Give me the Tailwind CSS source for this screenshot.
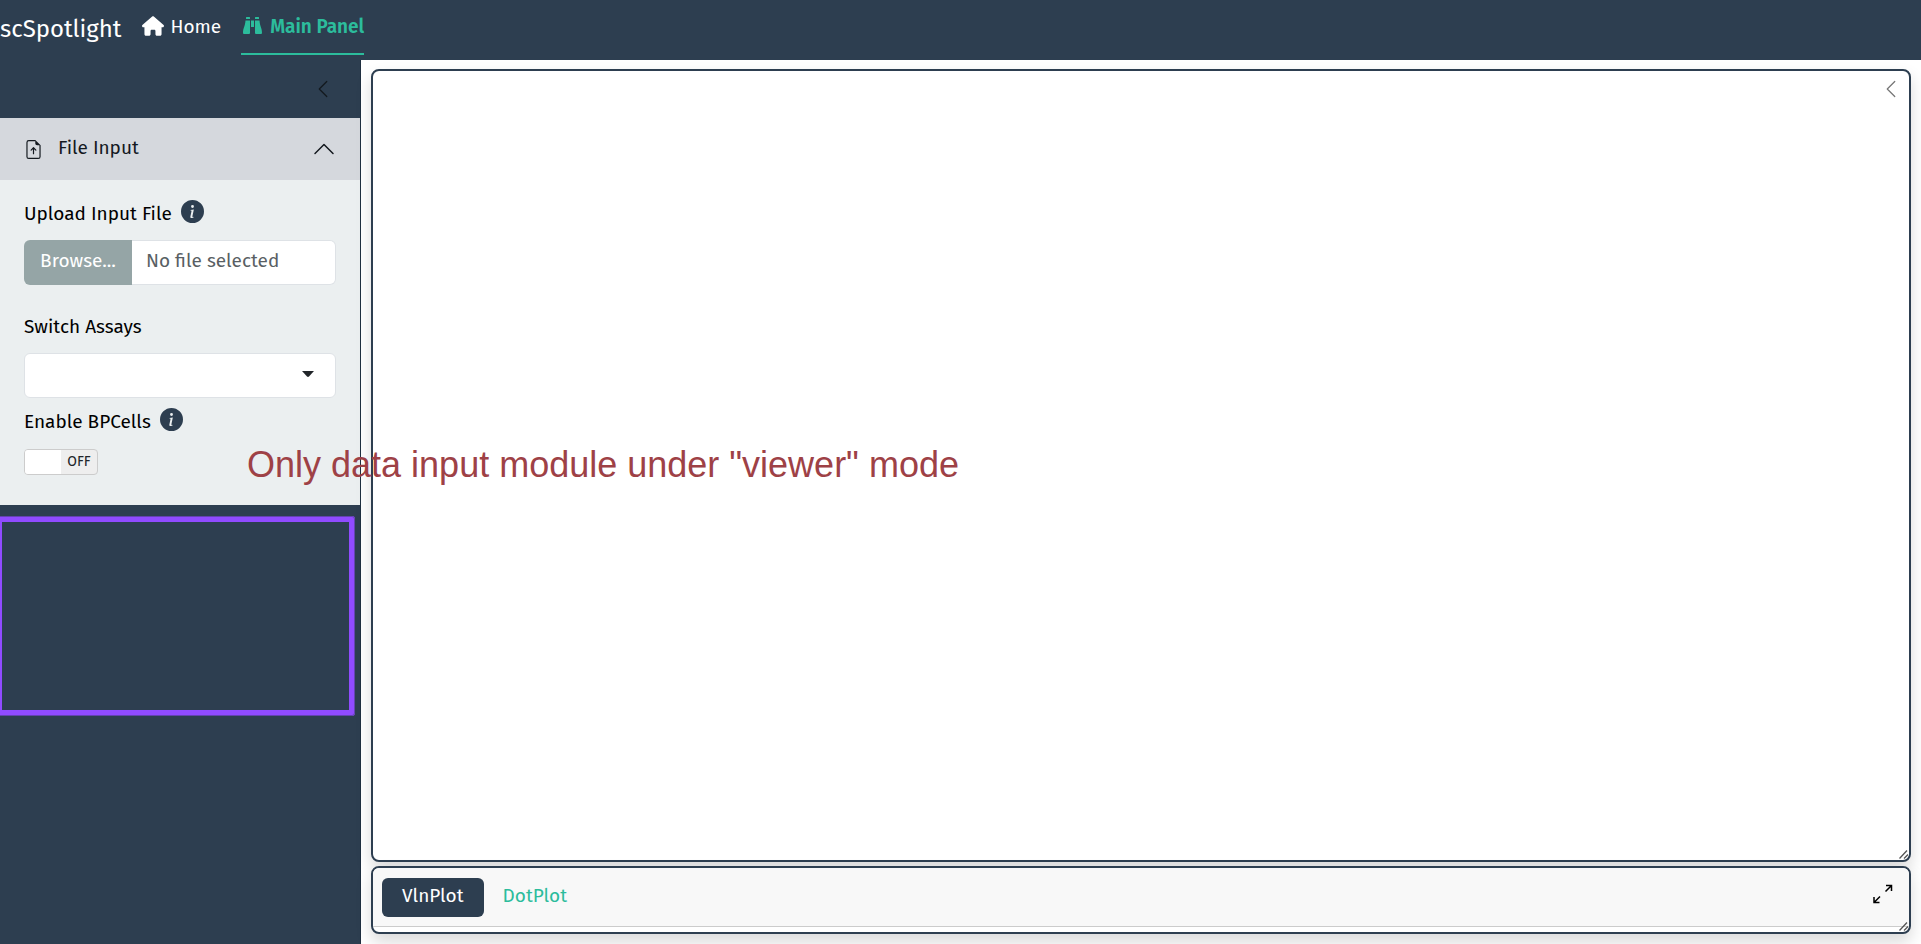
<!DOCTYPE html>
<html lang="en">
<head>
<meta charset="utf-8">
<meta name="viewport" content="width=device-width, initial-scale=1">
<title>scSpotlight</title>
<script src="https://cdn.jsdelivr.net/npm/@tailwindcss/browser@4"></script>
</head>
<body class="relative flex h-screen flex-col overflow-hidden bg-white font-['Fira_Sans','Noto_Sans',sans-serif] text-[19px] leading-7 text-black">

<header class="flex h-[60px] shrink-0 items-start bg-[#2d3e50] text-white">
  <a href="#" class="mt-[13px] mr-[21px] text-[24px] leading-8">scSpotlight</a>
  <nav class="flex h-[55px] gap-5">
    <a href="#" class="flex items-start gap-[6px] pt-[13px]">
      <svg class="mt-[3px] h-5 w-[22px]" viewBox="0 0 576 512" fill="currentColor" aria-hidden="true"><path d="M575.8 255.500c0 18-15 32.100-32 32.100h-32l.7 160.200c0 2.700-.2 5.400-.5 8.100V472c0 22.100-17.900 40-40 40H456c-1.100 0-2.200 0-3.300-.1c-1.400 .1-2.800 .1-4.200 .1H416 392c-22.100 0-40-17.900-40-40V448 384c0-17.700-14.300-32-32-32H256c-17.700 0-32 14.300-32 32v64 24c0 22.100-17.900 40-40 40H160 128.100c-1.500 0-3-.1-4.500-.2c-1.200 .1-2.400 .2-3.600 .2H104c-22.100 0-40-17.900-40-40V360c0-.9 0-1.900 .1-2.800V287.600H32c-18 0-32-14-32-32.100c0-9 3-17 10-24L266.400 8c7-7 15-8 22-8s15 2 21 7L564.800 231.500c8 7 12 15 11 24z"/></svg>
      <span>Home</span>
    </a>
    <a href="#" aria-current="page" class="flex items-start gap-[7px] border-b-2 border-[#2cbc9c] pt-[13px] font-semibold text-[#2cbc9c]">
      <svg class="mt-[3px] h-[18px] w-[22px]" viewBox="0 0 22 18" fill="currentColor" aria-hidden="true"><path d="M5.500 1h3q.5 0 .5.500V3H5V1.500q0-.5.500-.5zM4.500 4.500H9V17q0 1-1 1H3q-1 0-1-1c0-5 2-6 2.500-12.500zM10 4.500h3V11h-3zM14.500 1h3q.5 0 .5.500V3h-4V1.500q0-.5.500-.5zM14 4.500h4.500C19 11 21 12 21 17q0 1-1 1h-5q-1 0-1-1z"/></svg>
      <span>Main Panel</span>
    </a>
  </nav>
</header>

<div class="flex min-h-0 flex-1">
  <aside class="w-[361px] shrink-0 border-r border-[#1f2f40] bg-[#2d3e50]">
    <div class="flex h-[58px] items-center justify-end pr-[27px]">
      <button type="button" aria-label="Collapse sidebar" class="text-[#13191f]">
        <svg class="size-5" viewBox="0 0 16 16" fill="none" stroke="currentColor" stroke-linecap="round" stroke-linejoin="round" aria-hidden="true"><path d="M11 2 5 8l6 6"/></svg>
      </button>
    </div>
    <section>
      <h2>
        <button type="button" aria-expanded="true" aria-controls="file-input" class="flex h-[62px] w-full items-center bg-[#d5d8dd] px-6 text-left text-[#14191f]">
          <svg class="mr-[15px] size-[19px]" viewBox="0 0 16 16" fill="currentColor" aria-hidden="true"><path d="M8.500 11.500a.5.5 0 0 1-1 0V7.707L6.354 8.854a.5.5 0 1 1-.708-.708l2-2a.5.5 0 0 1 .708 0l2 2a.5.5 0 0 1-.708.708L8.500 7.707z"/><path d="M14 14V4.500L9.500 0H4a2 2 0 0 0-2 2v12a2 2 0 0 0 2 2h8a2 2 0 0 0 2-2M9.500 3A1.500 1.500 0 0 0 11 4.500h2V14a1 1 0 0 1-1 1H4a1 1 0 0 1-1-1V2a1 1 0 0 1 1-1h5.500z"/></svg>
          <span class="pb-[2px]">File Input</span>
          <svg class="ml-auto size-6" viewBox="0 0 16 16" fill="none" stroke="currentColor" stroke-linecap="round" stroke-linejoin="round" aria-hidden="true"><path d="m2 11 6-6 6 6"/></svg>
        </button>
      </h2>
      <div id="file-input" class="flex flex-col bg-[#ebeff0] px-6 pt-5 pb-[30px]">
        <div class="mb-3 flex h-7 items-start gap-[9px]">
          <label for="upload">Upload Input File</label>
          <button type="button" aria-label="About input files">
            <svg class="size-[23px]" viewBox="0 0 16 16" fill="#2d3e50" aria-hidden="true"><path d="M8 16A8 8 0 1 0 8 0a8 8 0 0 0 0 16m.930-9.412-1 4.705c-.07.34.029.533.304.533.194 0 .487-.07.686-.246l-.088.416c-.287.346-.92.598-1.465.598-.703 0-1.002-.422-.808-1.319l.738-3.468c.064-.293.006-.399-.287-.47l-.451-.081.082-.381zM8 5.500a1 1 0 1 1 0-2 1 1 0 0 1 0 2"/></svg>
          </button>
        </div>
        <div class="mb-7 flex h-[45px]">
          <label class="flex w-[108px] shrink-0 cursor-pointer items-center justify-center rounded-l-md bg-[#95a5a6] pb-1 text-white">Browse...<input id="upload" type="file" class="sr-only"></label>
          <input type="text" readonly aria-label="Selected file" placeholder="No file selected" class="min-w-0 flex-1 rounded-r-md border border-l-0 border-[#dee2e6] bg-white px-[14px] pb-1 placeholder:text-[#595f64]">
        </div>
        <label for="assays" class="mb-3">Switch Assays</label>
        <div class="relative mb-[10px]">
          <select id="assays" class="block h-[45px] w-full appearance-none rounded-md border border-[#dee2e6] bg-white px-4"><option></option></select>
          <svg class="pointer-events-none absolute top-[18px] right-[22px] h-[6px] w-3" viewBox="0 0 12 6" fill="#212529" aria-hidden="true"><path d="M0 0h12L7 5.500Q6 6.400 5 5.500z"/></svg>
        </div>
        <div class="mb-[13px] flex h-7 items-start gap-[9px]">
          <label for="bpcells">Enable BPCells</label>
          <button type="button" aria-label="About BPCells">
            <svg class="size-[23px]" viewBox="0 0 16 16" fill="#2d3e50" aria-hidden="true"><path d="M8 16A8 8 0 1 0 8 0a8 8 0 0 0 0 16m.930-9.412-1 4.705c-.07.34.029.533.304.533.194 0 .487-.07.686-.246l-.088.416c-.287.346-.92.598-1.465.598-.703 0-1.002-.422-.808-1.319l.738-3.468c.064-.293.006-.399-.287-.47l-.451-.081.082-.381zM8 5.500a1 1 0 1 1 0-2 1 1 0 0 1 0 2"/></svg>
          </button>
        </div>
        <label class="flex h-[26px] w-[74px] cursor-pointer overflow-hidden rounded border border-[#cccccc] bg-[#eeeeee] text-[14px] leading-6 text-[#212529]">
          <input id="bpcells" type="checkbox" role="switch" class="sr-only">
          <span class="w-9 bg-white"></span>
          <span class="flex-1 text-center">OFF</span>
        </label>
      </div>
    </section>
  </aside>

  <main class="flex min-w-0 flex-1 flex-col gap-1 px-[10px] pt-[9px] pb-[10px]">
    <section aria-label="Plot" class="relative flex min-h-0 flex-1 items-start justify-end overflow-hidden rounded-lg border-2 border-[#2d3e50] bg-white pt-[8px] pr-2 shadow-[0_8px_16px_rgba(0,0,0,0.15)]">
      <button type="button" aria-label="Open side panel" class="text-[#777777]">
        <svg class="size-5" viewBox="0 0 16 16" fill="none" stroke="currentColor" stroke-linecap="round" stroke-linejoin="round" aria-hidden="true"><path d="M11 2 5 8l6 6"/></svg>
      </button>
      <svg class="absolute right-px bottom-px size-[9px] cursor-nwse-resize" viewBox="0 0 9 9" fill="none" stroke="#555" stroke-width="1.300" aria-hidden="true"><path d="M.5 8.500 8 .5M5 8.500l4-4"/></svg>
    </section>
    <section aria-label="Feature plots" class="relative h-[68px] shrink-0 overflow-hidden rounded-lg border-2 border-[#2d3e50] bg-white shadow-[0_8px_16px_rgba(0,0,0,0.15)]">
      <div class="flex h-[59px] items-center border-b border-[#cccccc] bg-[#f8f8f8] pr-4 pl-[9px]">
        <div role="tablist" class="flex">
          <button type="button" role="tab" aria-selected="true" class="h-[39px] rounded-md bg-[#2d3e50] px-5 pb-[2px] text-white">VlnPlot</button>
          <button type="button" role="tab" aria-selected="false" class="h-[39px] px-[19px] pb-[2px] text-[#2cbc9c]">DotPlot</button>
        </div>
        <button type="button" aria-label="Expand" class="ml-auto pb-[6px]">
          <svg class="size-5" viewBox="0 0 20 20" fill="none" stroke="#000" stroke-width="1.500" aria-hidden="true"><path d="M13 1.500h5.500V7M18.500 1.500l-6 6M6.500 18.500H1V13M1 18.500l6-6"/></svg>
        </button>
      </div>
      <svg class="absolute right-px bottom-px size-[9px] cursor-nwse-resize" viewBox="0 0 9 9" fill="none" stroke="#555" stroke-width="1.300" aria-hidden="true"><path d="M.5 8.500 8 .5M5 8.500l4-4"/></svg>
    </section>
  </main>
</div>

<!-- Annotations laid over the app -->
<div class="pointer-events-none absolute top-[516px] -left-1 h-[200px] w-[359px] rounded-[3px] border-6 border-[#904bff] outline -outline-offset-1 outline-[#6343b0]"></div>
<p class="pointer-events-none absolute top-[444px] left-[247px] font-['Liberation_Sans',sans-serif] text-[36px] leading-[42px] whitespace-nowrap text-[#9e4146]">Only data input module under "viewer" mode</p>
</body>
</html>
